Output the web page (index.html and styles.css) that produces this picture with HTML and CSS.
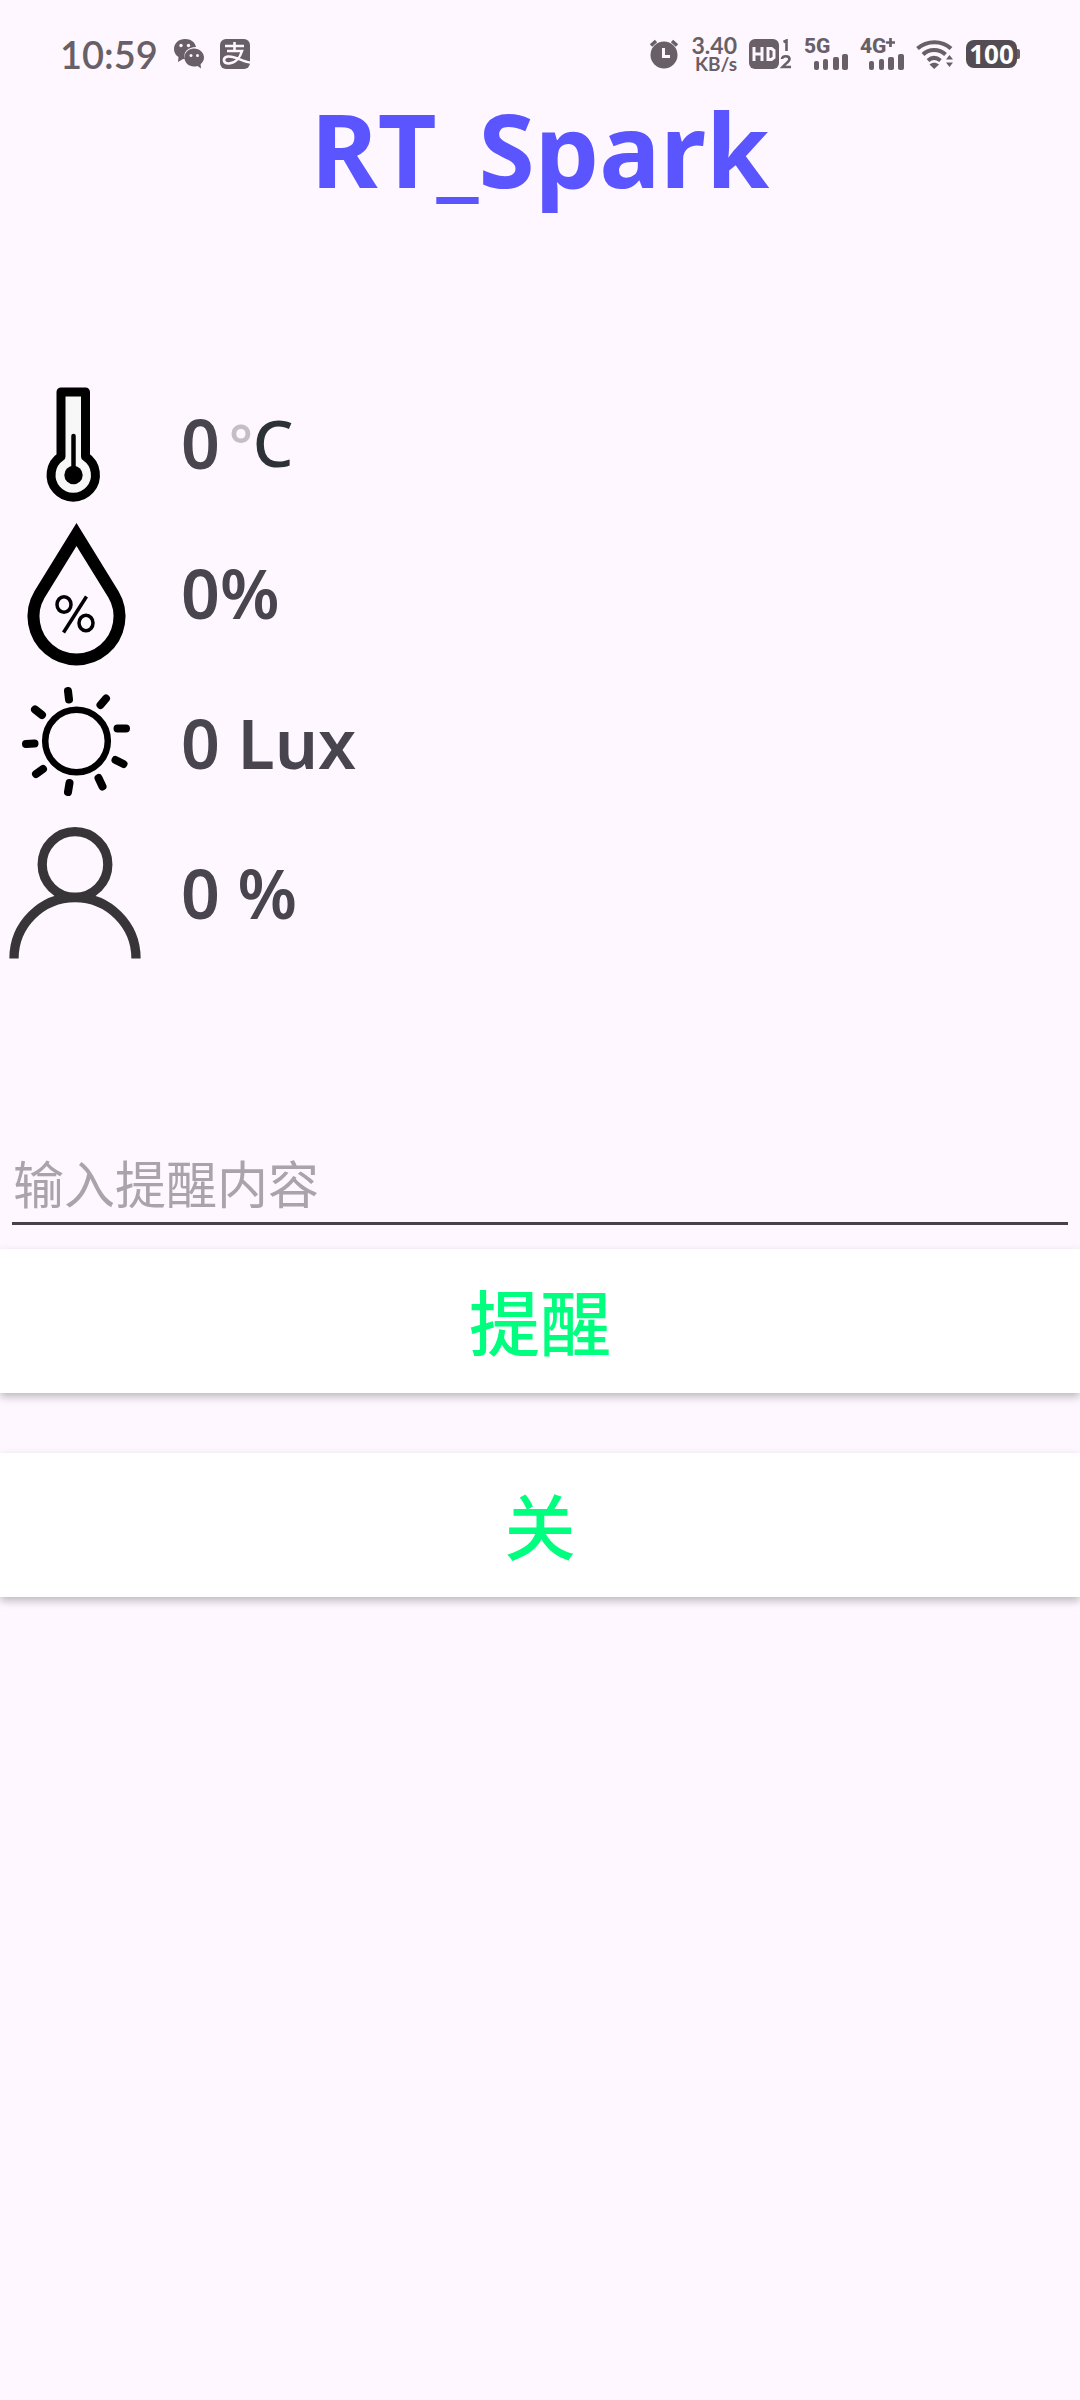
FILE: index.html
```html
<!DOCTYPE html>
<html lang="zh-CN">
<head>
<meta charset="utf-8">
<meta name="viewport" content="width=device-width, initial-scale=1">
<title>RT_Spark</title>
<link rel="stylesheet" href="styles.css">
</head>
<body>
<header class="status">
  <div class="status-left">
    <span class="clock">10:59</span>
    <svg class="app" viewBox="0 0 30 30" aria-hidden="true">
      <path fill="currentColor" d="M11 0C5 0 0 4 0 10c0 3.500 1.500 6 4.500 8L4 23l5-3 2 .2c-2.500-7 3-12.200 11-12.200C21 3 17 0 11 0z"/>
      <path fill="currentColor" d="M20 9.500c-5.500 0-9.500 4-9.500 9s4 9 9.500 9c1.300 0 2.500-.2 3.500-.6l3.500 2.600-.4-4.300c2-1.600 3.400-4 3.400-6.700 0-5-4.500-9-10-9z"/>
      <g fill="#fef7ff"><circle cx="7" cy="6.500" r="1.700"/><circle cx="14.500" cy="6.500" r="1.700"/><circle cx="17" cy="16.500" r="1.500"/><circle cx="23.500" cy="16.500" r="1.500"/></g>
    </svg>
    <svg class="app" viewBox="0 0 30 30" aria-hidden="true">
      <rect width="30" height="30" rx="6" fill="currentColor"/>
      <path fill="none" stroke="#fef7ff" stroke-width="2.600" d="M5 7h19M14.500 3v8M7 12h15c-2 7-7 12-13 12.500-6 .3-7-6-1-7 7-.8 14 5 22 6"/>
    </svg>
  </div>
  <div class="status-right">
    <svg class="app" viewBox="0 0 30 30" aria-hidden="true">
      <circle cx="15" cy="16" r="13.500" fill="currentColor"/>
      <path d="M2 6.500L7 2M28 6.500L23 2" stroke="currentColor" stroke-width="3.500"/>
      <path d="M14.500 9v8.500H21" fill="none" stroke="#fef7ff" stroke-width="3"/>
    </svg>
    <div class="speed"><span class="speed-num">3.40</span><span class="speed-unit">KB/s</span></div>
    <svg class="hd" viewBox="0 0 43 30" aria-hidden="true">
      <rect width="30" height="30" rx="6" fill="currentColor"/>
      <path fill="none" stroke="#fef7ff" stroke-width="3" d="M5 8v14M13 8v14M5 15h8M19 9.500h3.500l2.500 2v7l-2.500 2H19z"/>
      <path fill="none" stroke="currentColor" stroke-width="2.600" d="M34.500 3l3-1.500V12M33 20c0-4 7.500-3.500 7.500 0 0 2.500-4 4.500-7 8H42"/>
    </svg>
    <div class="signal">
      <span class="net">5G</span>
      <svg class="bars" viewBox="0 0 35 16" fill="currentColor" aria-hidden="true"><rect x="1" y="7" width="5" height="9" rx="2"/><rect x="10" y="5" width="5" height="11" rx="2"/><rect x="20" y="3" width="6" height="13" rx="2"/><rect x="29" y="0" width="6" height="16" rx="2"/></svg>
    </div>
    <div class="signal">
      <span class="net">4G<svg class="plus" viewBox="0 0 10 10" aria-label="+"><path d="M5 0v10M0 5h10" stroke="currentColor" stroke-width="3"/></svg></span>
      <svg class="bars" viewBox="0 0 35 16" fill="currentColor" aria-hidden="true"><rect x="0" y="7" width="5" height="9" rx="2"/><rect x="10" y="5" width="5" height="11" rx="2"/><rect x="19" y="3" width="6" height="13" rx="2"/><rect x="29" y="0" width="6" height="16" rx="2"/></svg>
    </div>
    <svg class="wifi" viewBox="0 0 38 30" aria-hidden="true">
      <g fill="none" stroke="currentColor" stroke-width="4"><path d="M1.500 9.500C11 1 26 1 35 9.500"/><path d="M7 15.500c6-6 16-6 22.500 0"/><path d="M12 21.500c4-3.500 8-3.500 12.500 0"/></g>
      <path fill="currentColor" d="M13.500 25.500c3-2.300 6.500-2.300 9.500 0L18.200 30zM30 20.500l3.500-4.500 3.500 4.500zM30 23.500h7l-3.500 4.500z"/>
    </svg>
    <div class="battery"><span class="charge">100</span><span class="nub"></span></div>
  </div>
</header>
<main>
  <h1 class="title">RT_Spark</h1>
  <ul class="readings">
    <li class="reading">
      <svg class="icon" viewBox="0 0 150 150" aria-hidden="true">
        <path d="M61 22h24.500v64.500a22.200 22.200 0 1 1-24.500 0z" fill="#f7f7f7" stroke="#000" stroke-width="9" stroke-linejoin="round"/>
        <path d="M73.500 66v39" stroke="#000" stroke-width="4.500" stroke-linecap="round"/>
        <circle cx="73.500" cy="105" r="9.200"/>
      </svg>
      <span class="value">0</span><span class="degree">°</span><span class="celsius">C</span>
    </li>
    <li class="reading">
      <svg class="icon" viewBox="0 0 150 150" aria-hidden="true">
        <path d="M76.500 14.500L39.500 74.500a43 43 0 1 0 74 0z" fill="none" stroke="#000" stroke-width="12" stroke-miterlimit="10"/>
        <g fill="none" stroke="#000" stroke-width="3.500"><ellipse cx="64" cy="84.500" rx="7" ry="7.800"/><ellipse cx="86" cy="103" rx="7" ry="7.800"/><path d="M86.500 76.500l-23 36"/></g>
      </svg>
      <span class="value">0%</span>
    </li>
    <li class="reading">
      <svg class="icon" viewBox="0 0 150 150" aria-hidden="true">
        <circle cx="76.500" cy="71" r="31.300" fill="none" stroke="#000" stroke-width="6.500"/>
        <path d="M68 21l1 8.500M106 28.500l-5.500 6.500M117.500 58.500h8.500M115.500 90l8 4M98.500 108l4 8.500M69.500 113l-1.500 9M43 99l-7 5M34.500 73.500l-8.500.500M42 45l-7-5.500" stroke="#000" stroke-width="8" stroke-linecap="round"/>
      </svg>
      <span class="value">0 Lux</span>
    </li>
    <li class="reading">
      <svg class="icon" viewBox="0 0 150 150" aria-hidden="true">
        <g fill="none" stroke="#373537" stroke-width="9.300"><circle cx="75" cy="44.500" r="32.800"/><path d="M14 138.500a61 61 0 0 1 122 0"/></g>
      </svg>
      <span class="value">0 %</span>
    </li>
  </ul>
  <form class="remind">
    <input class="content" type="text" placeholder="输入提醒内容" aria-label="输入提醒内容">
    <button class="action" type="button">提醒</button>
    <button class="action" type="button">关</button>
  </form>
</main>
</body>
</html>
```
FILE: styles.css
```css
* { box-sizing: border-box; }
body {
  margin: 0;
  min-height: 100vh;
  background: #fef7ff;
  color: #49454f;
  font-family: "Noto Sans", "Noto Sans CJK SC", sans-serif;
}
svg { display: block; flex: none; }

.status {
  display: flex;
  justify-content: space-between;
  align-items: center;
  height: 104px;
  padding: 4px 60px 0;
  color: #685f67;
}
.status-left, .status-right { display: flex; align-items: center; }
.status-left { gap: 16px; }
.status-right { gap: 12px; }
.clock { font-family: Lato, sans-serif; font-size: 38px; font-weight: 600; }
.app { width: 30px; height: 30px; }
.speed {
  display: flex;
  flex-direction: column;
  align-items: flex-end;
  width: 46px;
  font-family: Lato, sans-serif;
  font-weight: 700;
}
.speed-num { font-size: 23px; line-height: 20px; }
.speed-unit { font-size: 19px; line-height: 18px; }
.hd { width: 43px; height: 30px; }
.signal {
  display: flex;
  flex-direction: column;
  width: 44px;
}
.net {
  display: flex;
  align-items: flex-start;
  font-family: Roboto, sans-serif;
  font-size: 21px;
  font-weight: 800;
  line-height: 16px;
}
.plus { width: 9px; height: 9px; }
.bars { width: 35px; height: 16px; align-self: flex-end; }
.wifi { width: 38px; height: 30px; }
.battery { display: flex; align-items: center; }
.charge {
  width: 51px;
  height: 28px;
  border-radius: 8px;
  background: #534c52;
  color: #fff;
  font-size: 26px;
  font-weight: 700;
  line-height: 28px;
  text-align: center;
}
.nub {
  width: 3px;
  height: 10px;
  border-radius: 0 2px 2px 0;
  background: currentColor;
}

.title {
  margin: 0;
  height: 266px;
  color: #5b55ff;
  font-size: 102px;
  font-weight: 700;
  line-height: 90px;
  text-align: center;
}
.readings { margin: 0; padding: 0; list-style: none; }
.reading { display: flex; align-items: center; height: 150px; }
.icon { width: 150px; height: 150px; margin-right: 31px; }
.value, .degree, .celsius { padding-bottom: 4px; line-height: 90px; }
.value { font-size: 68px; font-weight: 600; white-space: pre; }
.degree, .celsius { font-size: 64px; }
.degree { margin-left: 9px; color: #c4bfc5; font-size: 56px; font-weight: 600; }
.celsius { color: #2c3237; font-weight: 500; }

.remind { display: flex; flex-direction: column; padding-top: 165px; }
.content {
  height: 90px;
  margin: 0 12px 24px;
  padding: 6px 0 0 1px;
  border: 0;
  border-bottom: 3px solid #49404a;
  background: none;
  color: #49454f;
  font-family: "Noto Sans CJK SC", sans-serif;
  font-size: 51px;
  font-weight: 400;
  outline: 0;
}
.content::placeholder { color: #aaa3ab; opacity: 1; }
.action {
  height: 144px;
  padding: 0 0 4px;
  border: 0;
  background: #fff;
  box-shadow: 0 4px 8px rgba(0, 0, 0, .25);
  color: #00ff7f;
  font-family: "Noto Sans CJK SC", sans-serif;
  font-size: 71px;
  font-weight: 500;
  line-height: 96px;
}
.action + .action { margin-top: 60px; }
```
